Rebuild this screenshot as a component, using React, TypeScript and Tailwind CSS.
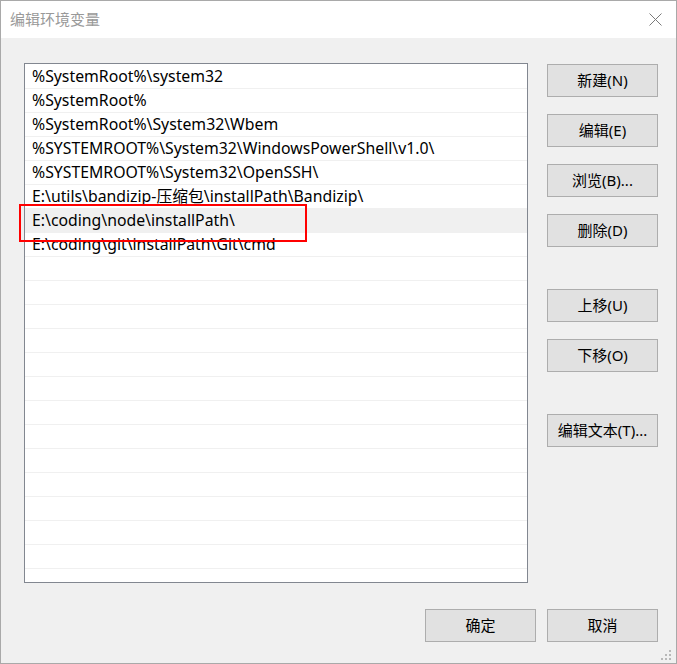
import React from "react";

const rows = [
  "%SystemRoot%\\system32",
  "%SystemRoot%",
  "%SystemRoot%\\System32\\Wbem",
  "%SYSTEMROOT%\\System32\\WindowsPowerShell\\v1.0\\",
  "%SYSTEMROOT%\\System32\\OpenSSH\\",
  "E:\\utils\\bandizip-压缩包\\installPath\\Bandizip\\",
  "E:\\coding\\node\\installPath\\",
  "E:\\coding\\git\\installPath\\Git\\cmd",
];

const font = { fontFamily: '"Segoe UI", "Noto Sans", "Noto Sans CJK SC", sans-serif' };

function Btn({ label, className = "" }: { label: string; className?: string }) {
  return (
    <div
      className={
        "w-[111px] h-[33px] shrink-0 border border-[#adadad] bg-[#e1e1e1] flex items-center justify-center text-[15px] text-black " +
        className
      }
    >
      {label}
    </div>
  );
}

export default function App() {
  const total = 22;
  return (
    <div
      className="relative w-[677px] h-[664px] border border-[#a9a9a9] bg-[#f0f0f0] flex flex-col"
      style={font}
    >
      <div className="h-[37px] bg-white flex items-center justify-between pl-[9px] pr-[14px]">
        <span className="text-[15px] text-[#999999]">编辑环境变量</span>
        <svg width="13" height="13" viewBox="0 0 13 13">
          <path d="M0.5 0.5 L12.5 12.5 M12.5 0.5 L0.5 12.5" stroke="#7a7a7a" strokeWidth="1" fill="none" />
        </svg>
      </div>
      <div className="flex-1 flex flex-col pl-[23px] pr-[18px] pt-[25px]">
        <div className="flex">
          <div className="relative w-[504px] h-[520px] border border-[#828790] bg-white pt-px overflow-hidden">
            {Array.from({ length: total }).map((_, i) => (
              <div
                key={i}
                className={
                  "h-[24px] border-b border-[#f0f0f0] flex items-center pl-[7px] pt-px text-[15.8px] text-black whitespace-nowrap " +
                  (i === 6 ? "bg-[#f0f0f0]" : "")
                }
              >
                {rows[i] ?? ""}
              </div>
            ))}
          </div>
          <div className="ml-[19px] pt-px flex flex-col">
            <Btn label="新建(N)" />
            <Btn label="编辑(E)" className="mt-[17px]" />
            <Btn label="浏览(B)..." className="mt-[17px]" />
            <Btn label="删除(D)" className="mt-[17px]" />
            <Btn label="上移(U)" className="mt-[42px]" />
            <Btn label="下移(O)" className="mt-[17px]" />
            <Btn label="编辑文本(T)..." className="mt-[42px]" />
          </div>
        </div>
        <div className="flex justify-end gap-[11px] mt-[26px]">
          <Btn label="确定" />
          <Btn label="取消" />
        </div>
      </div>
      <div className="absolute left-[18px] top-[203px] w-[288px] h-[38px] border-2 border-[#ff0000]" />
      <svg className="absolute right-[5px] bottom-[3px]" width="10" height="10" viewBox="0 0 10 10">
        <rect x="8" y="0" width="2" height="2" fill="#b8b8b8" />
        <rect x="4" y="4" width="2" height="2" fill="#b8b8b8" />
        <rect x="8" y="4" width="2" height="2" fill="#b8b8b8" />
        <rect x="0" y="8" width="2" height="2" fill="#b8b8b8" />
        <rect x="4" y="8" width="2" height="2" fill="#b8b8b8" />
        <rect x="8" y="8" width="2" height="2" fill="#b8b8b8" />
      </svg>
    </div>
  );
}
